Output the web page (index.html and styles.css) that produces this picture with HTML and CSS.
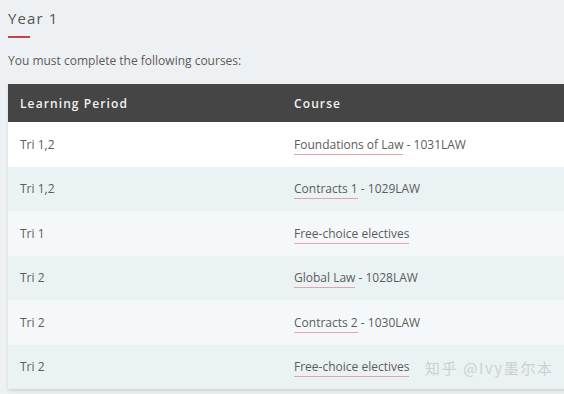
FILE: index.html
```html
<!DOCTYPE html>
<html>
<head>
<meta charset="utf-8">
<link rel="stylesheet" href="styles.css">
</head>
<body>
<div class="page">
  <h2 class="title">Year 1</h2>
  <div class="rule"></div>
  <p class="intro">You must complete the following courses:</p>
  <table class="courses">
    <thead>
      <tr><th class="c1">Learning Period</th><th>Course</th></tr>
    </thead>
    <tbody>
      <tr class="r-white"><td>Tri 1,2</td><td><span class="link">Foundations of Law</span> - 1031LAW</td></tr>
      <tr class="r-a"><td>Tri 1,2</td><td><span class="link">Contracts 1</span> - 1029LAW</td></tr>
      <tr class="r-b"><td>Tri 1</td><td><span class="link">Free-choice electives</span></td></tr>
      <tr class="r-a"><td>Tri 2</td><td><span class="link">Global Law</span> - 1028LAW</td></tr>
      <tr class="r-b"><td>Tri 2</td><td><span class="link">Contracts 2</span> - 1030LAW</td></tr>
      <tr class="r-a"><td>Tri 2</td><td><span class="link">Free-choice electives</span></td></tr>
    </tbody>
  </table>
  <div class="watermark">知乎 @Ivy墨尔本</div>
</div>
</body>
</html>
```
FILE: styles.css
```css
html, body {
  margin: 0;
  padding: 0;
  background: #eef1f3;
  overflow: hidden;
}
.page {
  position: relative;
  padding: 8px 0 0 8px;
  width: 640px;
  height: 394px;
  font-family: "Open Sans", "Noto Sans", sans-serif;
  color: #5c5c5c;
}
.title {
  margin: 0;
  font-size: 15px;
  font-weight: 400;
  letter-spacing: 1.1px;
  color: #555;
  line-height: 20px;
}
.rule {
  width: 22px;
  height: 2px;
  background: #c0454b;
  margin-top: 8px;
}
.intro {
  margin: 14px 0 0 0;
  font-size: 12px;
  line-height: 18px;
  color: #5c5c5c;
}
.courses {
  margin-top: 14px;
  border-collapse: collapse;
  width: 600px;
  box-shadow: 0 2px 3px rgba(0,0,0,0.12);
}
.courses th {
  background: #454545;
  color: #f2f2f2;
  text-align: left;
  font-size: 12px;
  font-weight: 600;
  letter-spacing: 1.1px;
  height: 38px;
  padding: 0 12px;
}
.courses th.c1 { width: 250px; }
.courses td {
  font-size: 12px;
  padding: 0 12px;
  height: 44.5px;
  color: #5c5c5c;
}
.r-white { background: #ffffff; }
.r-a { background: #eaf2f4; }
.r-b { background: #f4f8fa; }
.link {
  border-bottom: 1px solid #e4a3ab;
  padding-bottom: 1px;
}
.watermark {
  position: absolute;
  left: 425px;
  top: 357px;
  font-family: "Noto Sans CJK SC", sans-serif;
  font-size: 15px;
  color: #cfcfcf;
  letter-spacing: 1.6px;
}
```
